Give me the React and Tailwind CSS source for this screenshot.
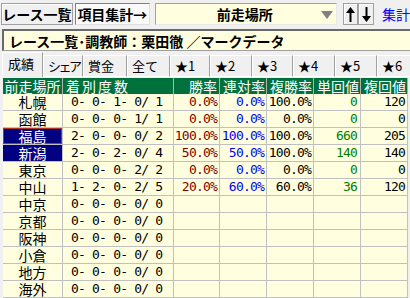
import React from "react";

const rows = [
  ["札幌", "0- 0- 1- 0/ 1", "0.0%", "0.0%", "100.0%", "0", "120"],
  ["函館", "0- 0- 0- 1/ 1", "0.0%", "0.0%", "0.0%", "0", "0"],
  ["福島", "2- 0- 0- 0/ 2", "100.0%", "100.0%", "100.0%", "660", "205"],
  ["新潟", "2- 0- 2- 0/ 4", "50.0%", "50.0%", "100.0%", "140", "140"],
  ["東京", "0- 0- 0- 2/ 2", "0.0%", "0.0%", "0.0%", "0", "0"],
  ["中山", "1- 2- 0- 2/ 5", "20.0%", "60.0%", "60.0%", "36", "120"],
  ["中京", "0- 0- 0- 0/ 0"],
  ["京都", "0- 0- 0- 0/ 0"],
  ["阪神", "0- 0- 0- 0/ 0"],
  ["小倉", "0- 0- 0- 0/ 0"],
  ["地方", "0- 0- 0- 0/ 0"],
  ["海外", "0- 0- 0- 0/ 0"],
];

const numColors = ["text-[#800000]", "text-[#0000ff]", "text-black", "text-[#008000]", "text-black"];

const tabs = [
  { label: "シェア", w: "w-[40px]", t: "tracking-[-2.5px]" },
  { label: "賞金", w: "w-[44px]", t: "" },
  { label: "全て", w: "w-[43px]", t: "" },
  { label: "★1", w: "w-[40px]", t: "" },
  { label: "★2", w: "w-[42px]", t: "" },
  { label: "★3", w: "w-[41px]", t: "" },
  { label: "★4", w: "w-[42px]", t: "" },
  { label: "★5", w: "w-[42px]", t: "" },
  { label: "★6", w: "w-[42px]", t: "" },
];

function UpArrow() {
  return (
    <svg width="9" height="15" viewBox="0 0 9 15">
      <path d="M4.5 0 L9 6 L5.5 6 L5.5 15 L3.5 15 L3.5 6 L0 6 Z" fill="#000" />
    </svg>
  );
}
function DownArrow() {
  return (
    <svg width="9" height="15" viewBox="0 0 9 15">
      <path d="M4.5 15 L9 9 L5.5 9 L5.5 0 L3.5 0 L3.5 9 L0 9 Z" fill="#000" />
    </svg>
  );
}

const headCell =
  "h-[16px] bg-[#00703c] text-white text-[14px] leading-[14px] flex items-center border-r border-[#b0b0b0] whitespace-nowrap";
const monoCell =
  "h-[17px] flex items-center bg-[#ffffe0] border-r border-b border-[#c0c0c0] font-['DejaVu_Sans_Mono',monospace] text-[13px] leading-[14px] tracking-[-0.8px] whitespace-pre overflow-hidden";

export default function App() {
  return (
    <div className="w-[410px] h-[298px] overflow-hidden bg-[#f0f0f0] font-['Noto_Sans_CJK_JP','DejaVu_Sans',sans-serif] text-black leading-none select-none">
      {/* top bar */}
      <div className="flex items-center h-[28px] pl-[1px] whitespace-nowrap">
        <div className="w-[73px] h-[22px] flex items-center justify-center bg-[#f0f0f0] border border-[#a0a0a0] shadow-[inset_1px_1px_0_#ffffff] text-[14px] leading-[16px] font-bold">
          レース一覧
        </div>
        <div className="ml-[2px] w-[77px] h-[22px] flex items-center justify-center bg-[#fafafa] border border-t-[#808080] border-l-[#808080] border-r-[#e0e0e0] border-b-[#e0e0e0] text-[14px] leading-[16px] font-bold">
          項目集計→
        </div>
        <div className="ml-[5px] w-[185px] h-[22px] relative flex items-center justify-center bg-[#ffffe0] border border-t-[#a0a0a0] border-l-[#a0a0a0] border-r-[#e8e8e8] border-b-[#e8e8e8] text-[14px] leading-[16px] font-bold">
          <span className="pr-[2px]">前走場所</span>
          <svg className="absolute right-[3px] top-[7px]" width="12" height="8" viewBox="0 0 12 8">
            <path d="M0 0 L12 0 L6 8 Z" fill="#808080" />
          </svg>
        </div>
        <div className="ml-[6px] w-[16px] h-[22px] flex items-center justify-center bg-[#f0f0f0] border border-[#a0a0a0] shadow-[inset_1px_1px_0_#ffffff]">
          <UpArrow />
        </div>
        <div className="w-[16px] h-[22px] flex items-center justify-center bg-[#f0f0f0] border border-[#a0a0a0] shadow-[inset_1px_1px_0_#ffffff]">
          <DownArrow />
        </div>
        <div className="ml-[8px] text-[14px] leading-[16px] text-[#0000ff]">集計</div>
      </div>

      {/* title */}
      <div className="mt-[1px] ml-[2px] h-[22px] flex items-center pl-[5px] bg-[#ffffe0] border-t-2 border-l-2 border-b border-[#6a6a6a] border-b-[#a0a0a0] text-[14px] leading-[16px] font-bold whitespace-nowrap">
        レース一覧･調教師：栗田徹 ／マークデータ
      </div>

      {/* tabs */}
      <div className="h-[26px] flex items-end pl-[2px] whitespace-nowrap">
        <div className="w-[41px] shrink-0 h-[25px] flex items-center pl-[5px] pb-[2px] bg-[#f0f0f0] border-t border-l border-t-white border-l-white border-r border-r-[#a0a0a0] text-[13px] leading-[14px]">
          成績
        </div>
        {tabs.map((t) => (
          <div
            key={t.label}
            className={`${t.w} shrink-0 h-[22px] flex items-center pl-[4px] bg-[#f0f0f0] border-t border-l border-t-white border-l-white border-r border-r-[#a0a0a0] border-b border-b-white text-[13px] leading-[14px] ${t.t}`}
          >
            {t.label}
          </div>
        ))}
      </div>

      {/* table */}
      <div className="mt-[1px] ml-[3px] w-[405px] grid grid-cols-[60px_111px_46px_47px_47px_47px_47px]">
        <div className={`${headCell} justify-center`}>前走場所</div>
        <div className={`${headCell} pl-[3px] tracking-[2px]`}>着別度数</div>
        <div className={`${headCell} justify-end pr-[2px]`}>勝率</div>
        <div className={`${headCell} justify-end pr-[1px]`}>連対率</div>
        <div className={`${headCell} justify-end pr-[1px]`}>複勝率</div>
        <div className={`${headCell} justify-end pr-[1px]`}>単回値</div>
        <div className={`${headCell} justify-end pr-[1px]`}>複回値</div>

        {rows.map((r, i) => {
          const sel = i === 2 || i === 3;
          const focus = i === 2;
          return (
            <React.Fragment key={r[0]}>
              <div
                className={`h-[17px] flex items-center justify-center text-[14px] leading-[14px] border-r border-b border-[#c0c0c0] ${
                  sel ? "bg-[#000080] text-white" : "bg-[#ffffe0]"
                } ${focus ? "shadow-[inset_0_0_0_1px_#b03030]" : ""}`}
              >
                {r[0]}
              </div>
              <div className={`${monoCell} pl-[8px]`}>{r[1]}</div>
              {[0, 1, 2, 3, 4].map((k) => (
                <div
                  key={k}
                  className={`${monoCell} justify-end ${k === 3 ? "pr-[3px]" : "pr-[2px]"} ${numColors[k]}`}
                >
                  {r[2 + k] ?? ""}
                </div>
              ))}
            </React.Fragment>
          );
        })}
      </div>
    </div>
  );
}
